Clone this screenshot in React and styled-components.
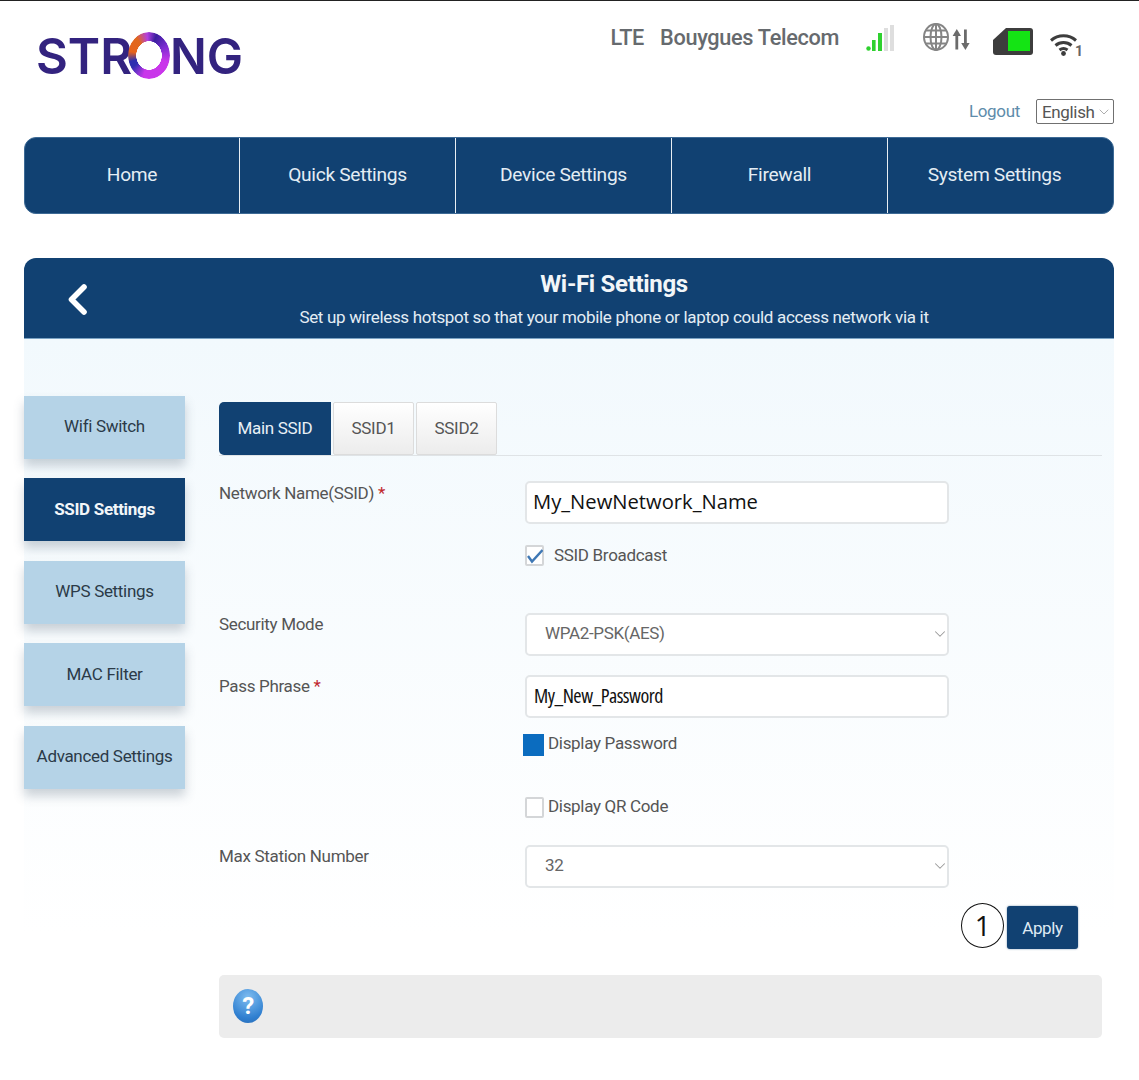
import React from "react";
import styled, { createGlobalStyle } from "styled-components";
import { ChevronDown } from "lucide-react";

const Global = createGlobalStyle`
  html, body { margin: 0; padding: 0; background: #fff; }
  body { font-family: Roboto, "Liberation Sans", sans-serif; color: #555; letter-spacing: -0.02em; }
  * { box-sizing: border-box; }
`;

const navy = "#114172";

const Page = styled.div`
  width: 1139px;
  height: 1080px;
  border-top: 1.5px solid #222;
  overflow: hidden;
`;

const Header = styled.header`
  height: 135.5px;
  padding: 0 25px 0 36px;
  display: flex;
  justify-content: space-between;
`;

const Logo = styled.div`
  display: flex;
  align-items: center;
  height: 46px;
  margin-top: 32px;
  font-family: Inter, "Liberation Sans", sans-serif;
  font-weight: 600;
  font-size: 50px;
  line-height: 46px;
  letter-spacing: 0;
  color: #33237f;
  filter: blur(0.4px);
`;

const LogoPart = styled.span`
  display: inline-block;
  width: ${(p) => p.$w}px;
  white-space: nowrap;
  transform-origin: left center;
  transform: scaleX(${(p) => p.$sx});
`;

const LogoRing = styled.span`
  display: inline-block;
  width: 42px;
  height: 47px;
  margin-top: -1px;
  border-radius: 50%;
  background: conic-gradient(from 20deg, #3a1f9e 0deg, #7a2bd0 40deg, #c936ea 90deg, #c936ea 175deg, #2d2fb0 215deg, #2d2fb0 232deg, #e8641c 262deg, #e0681e 305deg, #b23fe0 335deg, #3a1f9e 360deg);
  -webkit-mask: radial-gradient(ellipse 50% 50%, transparent 0 60%, #000 62%);
  mask: radial-gradient(ellipse 50% 50%, transparent 0 60%, #000 62%);
`;

const HeaderRight = styled.div`
  display: flex;
  flex-direction: column;
  align-items: flex-end;
`;

const StatusRow = styled.div`
  display: flex;
  align-items: flex-start;
  height: 59px;
  margin-top: 22px;
  margin-right: 29px;
`;

const StatusText = styled.span`
  font-weight: 500;
  font-size: ${(p) => p.$size}px;
  line-height: 30px;
  color: #666a6e;
  margin-right: ${(p) => p.$mr}px;
  white-space: nowrap;
`;

const StatusIcon = styled.svg`
  display: block;
  flex: none;
  margin-top: ${(p) => p.$mt || 0}px;
  margin-right: ${(p) => p.$mr || 0}px;
`;

const StatusDigit = styled.text`
  font-family: Roboto, sans-serif;
  font-size: 14px;
  font-weight: 700;
  fill: #666;
  stroke: none;
`;

const AccountRow = styled.div`
  display: flex;
  align-items: center;
  gap: 16px;
  height: 25px;
  margin-top: 17px;
`;

const Logout = styled.a`
  font-size: 17px;
  color: #5e8cab;
  line-height: 25px;
`;

const LangBox = styled.div`
  position: relative;
  width: 78px;
  height: 25px;
`;

const Lang = styled.select`
  appearance: none;
  width: 100%;
  height: 100%;
  border: 1px solid #707070;
  border-radius: 2px;
  background: #fff;
  padding: 0 0 0 5px;
  font-family: Roboto, sans-serif;
  font-size: 17px;
  letter-spacing: -0.02em;
  color: #555;
`;

const Chevron = styled(ChevronDown)`
  position: absolute;
  right: ${(p) => p.$r}px;
  top: 50%;
  transform: translateY(-50%);
  color: #999;
  pointer-events: none;
`;

const Nav = styled.nav`
  margin: 0 25px 0 24px;
  height: 77px;
  display: grid;
  grid-template-columns: 214px repeat(3, 216px) 1fr;
  background: ${navy};
  border-radius: 12px;
  border: 1px solid #3d6a95;
`;

const NavItem = styled.a`
  display: flex;
  align-items: center;
  justify-content: center;
  color: #e4edf4;
  font-size: 19.2px;
  padding-bottom: 2px;
  padding-right: ${(p) => (p.$last ? 12 : 0)}px;
  border-left: ${(p) => (p.$first ? "0" : "1px solid #e8eef3")};
`;

const Panel = styled.section`
  margin: 44px 25px 0 24px;
`;

const PanelHead = styled.div`
  position: relative;
  height: 81px;
  background: ${navy};
  border-radius: 12px 12px 0 0;
  color: #fff;
  text-align: center;
  padding: 9px 0 0 90px;
  border-bottom: 1px solid #7ba3c4;
`;

const Back = styled.svg`
  position: absolute;
  left: 44px;
  top: 25px;
`;

const PanelTitle = styled.h1`
  margin: 0;
  font-size: 24px;
  line-height: 34px;
  font-weight: 700;
  color: #f2f6f9;
`;

const PanelSub = styled.p`
  margin: 5px 0 0;
  font-size: 17px;
  line-height: 22px;
  color: #e4edf4;
`;

const PanelBody = styled.div`
  display: flex;
  height: 662px;
  padding-top: 57px;
  background: linear-gradient(#f2f9fd, #fff 90%);
`;

const Side = styled.div`
  width: 161px;
  flex: none;
  display: flex;
  flex-direction: column;
  gap: 19.5px;
`;

const SideItem = styled.a`
  height: 63px;
  padding-bottom: 2px;
  display: flex;
  align-items: center;
  justify-content: center;
  font-size: 17px;
  font-weight: ${(p) => (p.$active ? 700 : 400)};
  color: ${(p) => (p.$active ? "#f2f6f9" : "#2b3a48")};
  background: ${(p) => (p.$active ? navy : "#b5d3e7")};
  box-shadow: 0 7px 10px rgba(60, 80, 100, 0.25);
  white-space: nowrap;
`;

const Main = styled.div`
  width: 883px;
  margin-left: 34px;
  flex: none;
`;

const Tabs = styled.div`
  display: flex;
  gap: 2px;
  margin-top: 6px;
  height: 54px;
  border-bottom: 1px solid #dfe3e6;
`;

const Tab = styled.a`
  width: ${(p) => p.$w}px;
  height: 53px;
  display: flex;
  align-items: center;
  justify-content: center;
  font-size: 17px;
  color: ${(p) => (p.$active ? "#e8f0f6" : "#555")};
  background: ${(p) => (p.$active ? navy : "linear-gradient(#fff, #ececec)")};
  border: ${(p) => (p.$active ? "0" : "1px solid #dcdcdc")};
  border-radius: ${(p) => (p.$active ? "5px 0 0 5px" : "2px")};
`;

const Row = styled.div`
  display: flex;
  align-items: flex-start;
  height: ${(p) => p.$h}px;
  margin-top: ${(p) => p.$mt || 0}px;
`;

const Label = styled.label`
  width: 306px;
  flex: none;
  font-size: 17px;
  line-height: 22px;
  padding-top: ${(p) => p.$pt || 0}px;
  color: #555;
`;

const Required = styled.span`
  color: #c0272d;
`;

const Field = styled.div`
  position: relative;
  width: 424px;
  height: 43px;
  flex: none;
`;

const TextInput = styled.input`
  width: 100%;
  height: 100%;
  border: 2px solid #e3e6e8;
  border-radius: 5px;
  background: #fff;
  padding: 0 0 2px 6px;
  font-family: "Open Sans", sans-serif;
  font-size: 20.2px;
  letter-spacing: 0;
  color: #111;
  outline: none;
`;

const CondensedInput = styled(TextInput)`
  padding-left: 7px;
  font-size: 20px;
  font-stretch: 75%;
  letter-spacing: -0.5px;
`;

const Select = styled.select`
  appearance: none;
  width: 100%;
  height: 100%;
  border: 2px solid #e3e6e8;
  border-radius: 5px;
  background: #fff;
  padding: 0 0 3px 18px;
  font-family: Roboto, sans-serif;
  font-size: 17px;
  letter-spacing: -0.02em;
  color: #666;
`;

const CheckRow = styled.div`
  display: flex;
  align-items: center;
  height: ${(p) => p.$h}px;
  margin-left: ${(p) => p.$ml}px;
  margin-top: ${(p) => p.$mt}px;
  gap: ${(p) => p.$gap}px;
  font-size: 17px;
  color: #555;
`;

const CheckText = styled.span`
  margin-top: ${(p) => p.$mt || 0}px;
`;

const CheckBox = styled.span`
  display: block;
  position: relative;
  width: 19px;
  height: 21px;
  flex: none;
  background: #fff;
  border: 2px solid #d4d6d8;
  border-radius: 2px;
`;

const CheckMark = styled.svg`
  position: absolute;
  left: 0;
  top: 2px;
`;

const BlueBox = styled.span`
  display: block;
  width: 21px;
  height: 22px;
  flex: none;
  background: #0b6cbf;
`;

const ApplyRow = styled.div`
  display: flex;
  justify-content: flex-end;
  align-items: center;
  gap: 3px;
  height: 44px;
  margin-top: 18px;
  padding-right: 24px;
`;

const Badge = styled.span`
  width: 43px;
  height: 45px;
  margin-top: -5px;
  flex: none;
  display: flex;
  align-items: center;
  justify-content: center;
  border: 1.5px solid #111;
  border-radius: 50%;
  background: #fff;
  color: #111;
  font-family: "Open Sans", sans-serif;
  font-size: 28px;
  font-weight: 400;
`;

const ApplyButton = styled.button`
  width: 71px;
  height: 43px;
  border: 0;
  border-radius: 3px;
  background: ${navy};
  color: #dfeaf3;
  font-family: Roboto, sans-serif;
  font-size: 17px;
  letter-spacing: -0.02em;
  box-shadow: 0 0 2px rgba(17, 65, 114, 0.6);
`;

const Help = styled.div`
  margin-top: 25px;
  height: 63px;
  background: #ececec;
  border-radius: 5px;
  display: flex;
  align-items: center;
  padding-left: 14px;
`;

const HelpIcon = styled.span`
  width: 30px;
  height: 34px;
  border-radius: 50%;
  display: flex;
  align-items: center;
  justify-content: center;
  background: radial-gradient(circle at 50% 25%, #7fbdf0, #2f7fd0 70%, #2a6cb5);
  color: #fff;
  font-size: 24px;
  font-weight: 700;
`;

export default function App() {
  return (
    <>
      <Global />
      <Page>
        <Header>
          <Logo aria-label="STRONG">
            <LogoPart $w={92} $sx={0.98}>STR</LogoPart>
            <LogoRing />
            <LogoPart $w={71} $sx={0.97}>NG</LogoPart>
          </Logo>
          <HeaderRight>
            <StatusRow>
              <StatusText $size={21.7} $mr={16}>LTE</StatusText>
              <StatusText $size={21.7} $mr={27}>Bouygues Telecom</StatusText>
              <StatusIcon $mt={1} $mr={29} width="28" height="28" viewBox="0 0 28 28">
                <circle cx="2.5" cy="24.5" r="2.2" fill="#2fd12f" />
                <rect x="6" y="16" width="3.6" height="11" fill="#2fd12f" />
                <rect x="12" y="9" width="4" height="18" fill="#2fd12f" />
                <rect x="18" y="4" width="4" height="23" fill="#dedede" />
                <rect x="24" y="1" width="4" height="26" fill="#dedede" />
              </StatusIcon>
              <StatusIcon $mr={3} width="26" height="28" viewBox="0 0 26 28" fill="none" stroke="#858585" strokeWidth="2">
                <ellipse cx="13" cy="14" rx="12" ry="13" />
                <ellipse cx="13" cy="14" rx="5.5" ry="13" />
                <path d="M13 1v26M1 14h24M3 7.5h20M3 20.5h20" />
              </StatusIcon>
              <StatusIcon $mt={6} $mr={23} width="18" height="21" viewBox="0 0 18 21" fill="#6b6b6b" stroke="none">
                <rect x="3.4" y="4" width="2.8" height="16.5" />
                <path d="M4.8 0L9 7H.6z" />
                <rect x="12" y="0.5" width="2.8" height="16.5" />
                <path d="M13.4 21L9.2 14h8.4z" />
              </StatusIcon>
              <StatusIcon $mt={4} $mr={16} width="40" height="28" viewBox="0 0 40 28">
                <path d="M13 1h24a3 3 0 0 1 3 3v21a3 3 0 0 1-3 3H3a3 3 0 0 1-3-3V13z" fill="#3d3d3d" />
                <rect x="15" y="4" width="22" height="20" fill="#14e414" />
              </StatusIcon>
              <StatusIcon $mt={8} width="36" height="28" viewBox="0 0 36 28" fill="none" stroke="#3d3d3d" strokeWidth="3">
                <path d="M2 9.5a19 19 0 0 1 25 0M6.5 14.5a12.5 12.5 0 0 1 16 0M10.5 19a6.5 6.5 0 0 1 8 0" />
                <circle cx="14.5" cy="22.5" r="2.4" fill="#3d3d3d" stroke="none" />
                <StatusDigit x="26" y="25">1</StatusDigit>
              </StatusIcon>
            </StatusRow>
            <AccountRow>
              <Logout>Logout</Logout>
              <LangBox>
                <Lang defaultValue="English">
                  <option>English</option>
                </Lang>
                <Chevron $r={2.5} size={16} strokeWidth={1.2} />
              </LangBox>
            </AccountRow>
          </HeaderRight>
        </Header>
        <Nav>
          <NavItem $first>Home</NavItem>
          <NavItem>Quick Settings</NavItem>
          <NavItem>Device Settings</NavItem>
          <NavItem>Firewall</NavItem>
          <NavItem $last>System Settings</NavItem>
        </Nav>
        <Panel>
          <PanelHead>
            <Back width="22" height="34" viewBox="0 0 22 34" fill="none" stroke="#fff" strokeWidth="5.6" strokeLinecap="round" strokeLinejoin="round">
              <path d="M16 4L3.5 16.5L16 29" />
            </Back>
            <PanelTitle>Wi-Fi Settings</PanelTitle>
            <PanelSub>Set up wireless hotspot so that your mobile phone or laptop could access network via it</PanelSub>
          </PanelHead>
          <PanelBody>
            <Side>
              <SideItem>Wifi Switch</SideItem>
              <SideItem $active>SSID Settings</SideItem>
              <SideItem>WPS Settings</SideItem>
              <SideItem>MAC Filter</SideItem>
              <SideItem>Advanced Settings</SideItem>
            </Side>
            <Main>
              <Tabs>
                <Tab $active $w={112}>Main SSID</Tab>
                <Tab $w={81}>SSID1</Tab>
                <Tab $w={81}>SSID2</Tab>
              </Tabs>
              <Row $h={43} $mt={25}>
                <Label $pt={1}>Network Name(SSID) <Required>*</Required></Label>
                <Field>
                  <TextInput readOnly value="My_NewNetwork_Name" />
                </Field>
              </Row>
              <CheckRow $h={21} $ml={306} $mt={21} $gap={10}>
                <CheckBox>
                  <CheckMark width="16" height="15" viewBox="0 0 16 15" fill="none" stroke="#3f78b5" strokeWidth="2.4">
                    <path d="M1 7l4 5.5L15.5 1" />
                  </CheckMark>
                </CheckBox>
                SSID Broadcast
              </CheckRow>
              <Row $h={43} $mt={47}>
                <Label>Security Mode</Label>
                <Field>
                  <Select defaultValue="WPA2-PSK(AES)">
                    <option>WPA2-PSK(AES)</option>
                  </Select>
                  <Chevron $r={0} size={18} strokeWidth={1.4} />
                </Field>
              </Row>
              <Row $h={43} $mt={19}>
                <Label $pt={0}>Pass Phrase <Required>*</Required></Label>
                <Field>
                  <CondensedInput readOnly value="My_New_Password" />
                </Field>
              </Row>
              <CheckRow $h={22} $ml={304} $mt={16} $gap={4}>
                <BlueBox />
                <CheckText $mt={-4}>Display Password</CheckText>
              </CheckRow>
              <CheckRow $h={21} $ml={306} $mt={41} $gap={4}>
                <CheckBox />
                <CheckText $mt={-2}>Display QR Code</CheckText>
              </CheckRow>
              <Row $h={43} $mt={27}>
                <Label>Max Station Number</Label>
                <Field>
                  <Select defaultValue="32">
                    <option>32</option>
                  </Select>
                  <Chevron $r={0} size={18} strokeWidth={1.4} />
                </Field>
              </Row>
              <ApplyRow>
                <Badge>1</Badge>
                <ApplyButton>Apply</ApplyButton>
              </ApplyRow>
              <Help>
                <HelpIcon>?</HelpIcon>
              </Help>
            </Main>
          </PanelBody>
        </Panel>
      </Page>
    </>
  );
}
